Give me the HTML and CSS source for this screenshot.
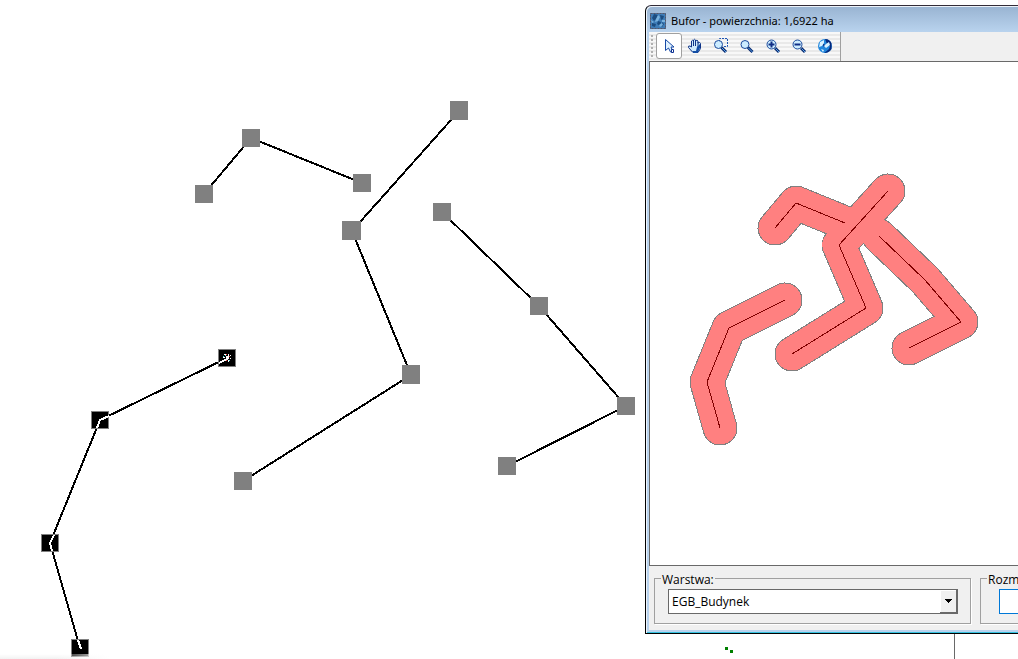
FILE: index.html
```html
<!DOCTYPE html>
<html lang="pl">
<head>
<meta charset="utf-8">
<title>Bufor</title>
<link rel="stylesheet" href="styles.css">
</head>
<body>
<main class="desktop">
  <svg class="map" shape-rendering="crispEdges" aria-label="Mapa">
    <g class="map-line">
      <path d="M204 194L251 138L362 183"/>
      <path d="M459 111L352 231L411 375L243 481"/>
      <path d="M442 212L539 306L626 406L507 466"/>
      <path d="M227 358L100 420L50 543L80 648"/>
      <path class="thin" d="M954.500 630V659"/>
    </g>
    <g class="node">
      <path d="M195 185h18v18h-18zM242 129h18v18h-18zM353 174h18v18h-18zM450 101h18v19h-18zM342 221h19v19h-19zM402 365h18v19h-18zM234 472h18v18h-18zM433 203h18v18h-18zM530 297h18v18h-18zM617 397h18v18h-18zM498 457h18v18h-18z"/>
    </g>
    <g class="active-node">
      <path d="M218.500 349.500h17v17h-17zM91.500 411.500h17v17h-17zM41.500 534.500h17v17h-17zM71.500 639.500h17v17h-17z"/>
    </g>
    <g class="inverse-line">
      <path d="M219 363L229 358M109 416L100 420L97 428M54 535L50 543L52 551M78 640L81 649"/>
    </g>
    <path fill="#fff" d="M224 354h2v1h-2zM228 354h1v2h-1zM230 355h1v1h-1zM223 357h2v1h-2zM226 356h3v3h-3zM230 358h1v1h-1zM228 360h1v2h-1z"/>
    <path fill="#f44" d="M226 354h1v1h-1zM229 356h1v1h-1zM226 360h1v1h-1z"/>
    <path fill="#5dd" d="M225 355h1v1h-1zM223 356h1v1h-1zM229 360h1v1h-1z"/>
    <path fill="#008000" d="M725 647h3v3h-3zM730 650h3v3h-3z"/>
  </svg>
  <div class="map-shadow"></div>

  <section class="window">
    <header class="titlebar">
      <svg class="app-icon" viewBox="0 0 16 16">
        <path fill="#3f7db8" d="M0 0h16v16H0z"/>
        <path fill="#1b4c80" d="M4 1l4 1-1 3-3 3-2-3zM10 2l4 1-1 3-2 1zM8 8l3 1-1 4-3-2zM2 10l4 1-1 3-3-1zM12 9l2 2-2 3z"/>
        <path fill="#79b2de" d="M8 2l2 2-2 4-3 1 1-3zM9 12l3-2 1 2-3 2zM1 7l3 2-2 1zM12 7h3v2h-3z"/>
        <path fill="none" stroke="#5a5562" stroke-dasharray="2 1" d="M.5.5h15v15H.5z"/>
      </svg>
      <h1 class="title">Bufor - powierzchnia: 1,6922 ha</h1>
    </header>
    <div class="client">
      <nav class="toolbar">
        <span class="grip"></span>
        <button class="tool selected" aria-label="Wskaźnik"><svg class="icon" viewBox="0 0 16 16">
          <path fill="#dff1ff" stroke="#1648a5" d="M4.500 1.500v11l3-2.500 2 4h2.500l-2-5h3z"/><path fill="#fff" stroke="#0d3090" d="M10.500 11.500h2v3h-2z"/></svg></button>
        <button class="tool" aria-label="Przesuń"><svg class="icon" viewBox="0 0 16 16">
          <path fill="#cfeafc" stroke="#0f3488" stroke-linejoin="round" d="M5.500 14L1.500 9.500Q1 7.500 3 8l1.500 1V3Q5.500 1.500 6.500 3V2Q7.500.5 8.500 2v1Q10 1.500 11 3v2q2-1.500 2.500.5v5L11 14.500z"/><path fill="none" stroke="#0f3488" d="M6.500 3v5M8.500 3v5M11 4v5"/><path fill="#154fa6" d="M10 9l3-3v4l-2.500 5H6v-2h3z"/></svg></button>
        <button class="tool" aria-label="Powiększ obszar"><svg class="icon" viewBox="0 0 16 16">
          <path fill="none" stroke="#1d55b5" stroke-dasharray="2 1" d="M6.500 4V.5h8v8H11"/><circle cx="5.500" cy="6.500" r="4" fill="#ccecff" stroke="#1d4b9c"/><path fill="none" stroke="#082a70" stroke-width="3" d="M8.500 9.500L13 14"/><path stroke="#5aa4ea" d="M9 10l4 4"/></svg></button>
        <button class="tool" aria-label="Lupa"><svg class="icon" viewBox="0 0 16 16">
          <circle cx="6" cy="6.500" r="4" fill="#ccecff" stroke="#1d4b9c"/><path fill="none" stroke="#082a70" stroke-width="3" d="M9 9.500l4.500 4.500"/><path stroke="#5aa4ea" d="M9.500 10l4 4"/></svg></button>
        <button class="tool" aria-label="Powiększ"><svg class="icon" viewBox="0 0 16 16">
          <circle cx="6.500" cy="6.500" r="4.500" fill="#ccecff" stroke="#1d4b9c"/><path stroke="#102f86" stroke-width="2" d="M3.500 6.500h6M6.500 3.500v6"/><path fill="none" stroke="#082a70" stroke-width="3" d="M10 10l4 4"/><path stroke="#5aa4ea" d="M10.500 10.500l3.500 3.500"/></svg></button>
        <button class="tool" aria-label="Pomniejsz"><svg class="icon" viewBox="0 0 16 16">
          <circle cx="6.500" cy="6.500" r="4.500" fill="#ccecff" stroke="#1d4b9c"/><path stroke="#102f86" stroke-width="2" d="M3.500 6.500h6"/><path fill="none" stroke="#082a70" stroke-width="3" d="M10 10l4 4"/><path stroke="#5aa4ea" d="M10.500 10.500l3.500 3.500"/></svg></button>
        <button class="tool" aria-label="Pełny zasięg"><svg class="icon" viewBox="0 0 16 16">
          <circle cx="8" cy="8" r="7" fill="#2086dc"/><path fill="#06297c" d="M8 1q5 0 6.500 4.500V11Q12 15 7 15q3-2 5-4l1-3-3-2zM5 5l3 2-1 2z"/><path fill="#d9f2ff" d="M3 4l4-2v3L5 8 2 9zM9 6l3-2 1 3-4 3-2-2zM4 11l3 1-1 2z"/></svg></button>
      </nav>
      <svg class="view" shape-rendering="crispEdges" aria-label="Podgląd bufora">
        <defs>
          <g id="axes">
            <path d="M775 228L796 203L845 223"/>
            <path d="M888 191L839 245L866 308L792 354"/>
            <path d="M879 236L925 280L961 322L909 348"/>
            <path d="M785 300L729 328L707 382L720 428"/>
          </g>
        </defs>
        <g transform="translate(-650 -62)">
          <use href="#axes" class="buffer-edge"/>
          <use href="#axes" class="buffer"/>
          <use href="#axes" class="axis"/>
        </g>
      </svg>
      <form class="options">
        <fieldset class="group layer">
          <legend class="legend"><label for="layer">Warstwa:</label></legend>
          <div class="combo">
            <select class="field" id="layer"><option>EGB_Budynek</option></select>
            <span class="combo-button"><svg class="arrow" viewBox="0 0 7 4" shape-rendering="crispEdges"><path d="M0 0h7v1H0zM1 1h5v1H1zM2 2h3v1H2zM3 3h1v1H3z"/></svg></span>
          </div>
        </fieldset>
        <fieldset class="group size">
          <legend class="legend"><label for="size">Rozm</label></legend>
          <input class="field focused" id="size" type="text">
        </fieldset>
      </form>
    </div>
  </section>
</main>
</body>
</html>
```
FILE: styles.css
```css
* { box-sizing: border-box; }
body {
  margin: 0;
  background: #fff;
  color: #000;
  font: 12px/16px "Open Sans", "Noto Sans", sans-serif;
}
.desktop {
  position: relative;
  height: 100vh;
  overflow: hidden;
}
.map { display: block; width: 100%; height: 100%; }
.map-line { fill: none; stroke: #000; stroke-width: 2; }
.map-line .thin { stroke: #696969; stroke-width: 1; }
.node { fill: #808080; }
.active-node { fill: #000; stroke: #808080; }
.inverse-line { fill: none; stroke: #fff; stroke-width: 2; }
.map-shadow {
  position: absolute;
  left: 0;
  bottom: 0;
  width: 110px;
  height: 5px;
  background: linear-gradient(90deg, transparent 50%, #fff), linear-gradient(transparent, rgba(0, 0, 0, .05));
}

/* Preview window, runs past the right edge of the desktop */
.window {
  position: absolute;
  top: 5px;
  left: 645px;
  right: -160px;
  bottom: 25px;
  display: flex;
  flex-direction: column;
  padding: 1px 3px 3px;
  border: 1px solid #000;
  border-top-color: #322c38;
  border-radius: 6px 0 0 0;
  background: linear-gradient(#98b3d1, #b9d3ee 26px);
  box-shadow: inset 1px 1px #edf3fa, inset 0 -1px #36c2e0;
}
.titlebar {
  display: flex;
  align-items: center;
  gap: 5px;
  height: 25px;
  padding: 3px 1px 0;
}
.app-icon { width: 16px; height: 16px; }
.title { margin: 0; font: 400 11px/16px "Noto Sans", "Open Sans", sans-serif; }
.client {
  flex: 1;
  display: flex;
  flex-direction: column;
  align-items: stretch;
  min-height: 0;
  background: #f0f0f0;
}
.toolbar {
  display: flex;
  align-items: center;
  align-self: flex-start;
  height: 29px;
  padding: 0 2px 2px;
  border-right: 1px solid #a0a0a0;
  background: repeating-linear-gradient(#f8f8f8 0 2px, #e9e9e9 2px 4px);
}
.grip {
  width: 2px;
  height: 22px;
  margin-right: 3px;
  background: repeating-linear-gradient(#b0b0b0 0 2px, transparent 2px 4px);
}
.tool {
  display: grid;
  place-items: center;
  width: 26px;
  height: 26px;
  padding: 0;
  border: 1px solid transparent;
  border-radius: 3px;
  background: none;
}
.tool.selected { border-color: #a0a0a0; background: #fff; }
.icon { width: 16px; height: 16px; }
.view {
  flex: 1;
  width: 100%;
  min-height: 0;
  border: 1px solid #696969;
  background: #fff;
}
.buffer-edge, .buffer, .axis { fill: none; stroke-linecap: round; stroke-linejoin: round; }
.buffer-edge { stroke: #808080; stroke-width: 35; }
.buffer { stroke: #ff8080; stroke-width: 33; }
.axis { stroke: #800000; stroke-width: 1; }

.options {
  display: flex;
  gap: 9px;
  height: 64px;
  padding: 5px 5px 6px;
}
.group {
  margin: 0;
  min-width: 0;
  padding: 4px 12px 9px 13px;
  border: 1px solid #a0a0a0;
  box-shadow: 1px 1px #fff;
}
.layer { width: 317px; }
.size { flex: 1; padding-left: 18px; }
.legend {
  height: 14px;
  margin-left: -7px;
  padding: 4px 1px 0;
  line-height: 10px;
}
.size .legend { margin-left: -12px; }
.combo { position: relative; }
.field {
  display: block;
  width: 100%;
  height: 25px;
  padding: 0 3px;
  border: 1px solid #696969;
  border-radius: 0;
  background: #fff;
  color: #000;
  font: inherit;
  appearance: none;
}
.field.focused { border-color: #0078d7; }
.combo-button {
  position: absolute;
  top: 1px;
  right: 1px;
  bottom: 1px;
  display: grid;
  place-items: center;
  width: 17px;
  border: solid #696969;
  border-width: 0 1px 1px 0;
  background: #f0f0f0;
  box-shadow: inset 1px 1px #fff;
  pointer-events: none;
}
.arrow { width: 7px; height: 4px; }
```
